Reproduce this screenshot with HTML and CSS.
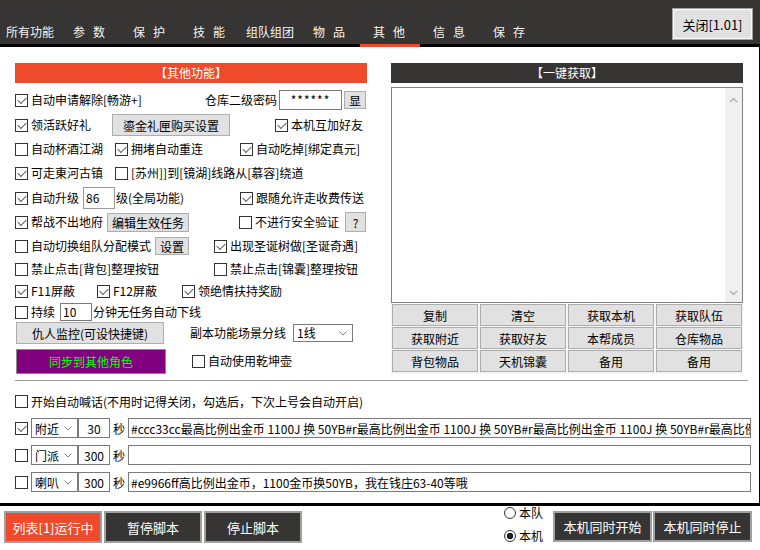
FILE: index.html
```html
<!DOCTYPE html>
<html lang="zh-CN">
<head>
<meta charset="utf-8">
<title>其他功能</title>
<link rel="stylesheet" href="styles.css">
</head>
<body>
<div class="app">
  <header class="topbar">
    <nav class="tabs">
      <span class="tab">所有功能</span>
      <span class="tab sp">参数</span>
      <span class="tab sp">保护</span>
      <span class="tab sp">技能</span>
      <span class="tab">组队组团</span>
      <span class="tab sp">物品</span>
      <span class="tab sp active">其他</span>
      <span class="tab sp">信息</span>
      <span class="tab sp">保存</span>
    </nav>
    <button class="close-btn">关闭[1.01]</button>
  </header>

  <main class="main">
    <div class="cols">
      <section class="left">
        <div class="hdr red">【其他功能】</div>
        <div class="rows">
          <div class="row h24 between">
            <label class="ck"><span class="box on"></span>自动申请解除[畅游+]</label>
            <div class="grp">
              <span>仓库二级密码</span>
              <span class="inp pw">******</span>
              <button class="btn show">显</button>
            </div>
          </div>
          <div class="row h26">
            <label class="ck c97"><span class="box on"></span>领活跃好礼</label>
            <button class="btn b-gift">鎏金礼匣购买设置</button>
            <label class="ck push"><span class="box on"></span>本机互加好友</label>
          </div>
          <div class="row h22">
            <label class="ck c100"><span class="box"></span>自动杯酒江湖</label>
            <label class="ck c125"><span class="box on"></span>拥堵自动重连</label>
            <label class="ck"><span class="box on"></span>自动吃掉[绑定真元]</label>
          </div>
          <div class="row h26">
            <label class="ck c100"><span class="box on"></span>可走東河古镇</label>
            <label class="ck"><span class="box"></span>[苏州]]到[镜湖]线路从[慕容]绕道</label>
          </div>
          <div class="row h24">
            <div class="grp c225">
              <label class="ck"><span class="box on"></span>自动升级</label>
              <span class="inp lvl">86</span>
              <span class="after">级(全局功能)</span>
            </div>
            <label class="ck"><span class="box on"></span>跟随允许走收费传送</label>
          </div>
          <div class="row h24">
            <div class="grp c224">
              <label class="ck"><span class="box on"></span>帮战不出地府</label>
              <button class="btn b-edit">编辑生效任务</button>
            </div>
            <label class="ck"><span class="box"></span>不进行安全验证</label>
            <button class="btn b-q">?</button>
          </div>
          <div class="row h24">
            <div class="grp c199">
              <label class="ck"><span class="box"></span>自动切换组队分配模式</label>
              <button class="btn b-set">设置</button>
            </div>
            <label class="ck"><span class="box on"></span>出现圣诞树做[圣诞奇遇]</label>
          </div>
          <div class="row h22">
            <label class="ck c199"><span class="box"></span>禁止点击[背包]整理按钮</label>
            <label class="ck"><span class="box"></span>禁止点击[锦囊]整理按钮</label>
          </div>
          <div class="row h22">
            <label class="ck c82"><span class="box on"></span>F11屏蔽</label>
            <label class="ck c85"><span class="box on"></span>F12屏蔽</label>
            <label class="ck"><span class="box on"></span>领绝情扶持奖励</label>
          </div>
          <div class="row h20">
            <label class="ck"><span class="box"></span>持续</label>
            <span class="inp mins">10</span>
            <span class="after">分钟无任务自动下线</span>
          </div>
          <div class="row h22">
            <button class="btn b-enemy">仇人监控(可设快捷键)</button>
            <span class="lbl-line">副本功能场景分线</span>
            <span class="sel line-sel">1线<svg width="8" height="5" viewBox="0 0 8 5"><polyline points="0.5,0.5 4,4 7.5,0.5" fill="none" stroke="#808080"/></svg></span>
          </div>
          <div class="row h28 mt3">
            <button class="btn purple">同步到其他角色</button>
            <label class="ck ml26"><span class="box"></span>自动使用乾坤壶</label>
          </div>
        </div>
      </section>

      <section class="right">
        <div class="hdr dark">【一键获取】</div>
        <div class="ta">
          <div class="ta-body"></div>
          <div class="vscroll">
            <svg width="9" height="6" viewBox="0 0 9 6"><polyline points="1,5 4.5,1.5 8,5" fill="none" stroke="#a6a6a6" stroke-width="1.2"/></svg>
            <svg width="9" height="6" viewBox="0 0 9 6"><polyline points="1,1 4.5,4.5 8,1" fill="none" stroke="#a6a6a6" stroke-width="1.2"/></svg>
          </div>
        </div>
        <div class="grid">
          <button class="gb">复制</button>
          <button class="gb">清空</button>
          <button class="gb">获取本机</button>
          <button class="gb">获取队伍</button>
          <button class="gb">获取附近</button>
          <button class="gb">获取好友</button>
          <button class="gb">本帮成员</button>
          <button class="gb">仓库物品</button>
          <button class="gb">背包物品</button>
          <button class="gb">天机锦囊</button>
          <button class="gb">备用</button>
          <button class="gb">备用</button>
        </div>
      </section>
    </div>

    <hr class="divider">

    <div class="shout">
      <div class="srow">
        <label class="ck"><span class="box"></span>开始自动喊话(不用时记得关闭，勾选后，下次上号会自动开启)</label>
      </div>
      <div class="srow">
        <span class="box on"></span>
        <span class="sel ssel">附近<svg width="8" height="5" viewBox="0 0 8 5"><polyline points="0.5,0.5 4,4 7.5,0.5" fill="none" stroke="#808080"/></svg></span>
        <span class="inp num">30</span>
        <span class="sec">秒</span>
        <span class="inp long">#ccc33cc最高比例出金币 1100J 换 50YB#r最高比例出金币 1100J 换 50YB#r最高比例出金币 1100J 换 50YB#r最高比例出金币</span>
      </div>
      <div class="srow">
        <span class="box"></span>
        <span class="sel ssel">门派<svg width="8" height="5" viewBox="0 0 8 5"><polyline points="0.5,0.5 4,4 7.5,0.5" fill="none" stroke="#808080"/></svg></span>
        <span class="inp num">300</span>
        <span class="sec">秒</span>
        <span class="inp long"></span>
      </div>
      <div class="srow">
        <span class="box"></span>
        <span class="sel ssel">喇叭<svg width="8" height="5" viewBox="0 0 8 5"><polyline points="0.5,0.5 4,4 7.5,0.5" fill="none" stroke="#808080"/></svg></span>
        <span class="inp num">300</span>
        <span class="sec">秒</span>
        <span class="inp long">#e9966ff高比例出金币，1100金币换50YB，我在钱庄63-40等哦</span>
      </div>
    </div>
  </main>

  <footer class="bottombar">
    <div class="bgroup">
      <button class="bb red">列表[1]运行中</button>
      <button class="bb">暂停脚本</button>
      <button class="bb">停止脚本</button>
    </div>
    <div class="radios">
      <label class="radio"><span class="dot"></span>本队</label>
      <label class="radio"><span class="dot on"></span>本机</label>
    </div>
    <div class="bgroup right-btns">
      <button class="bb wide">本机同时开始</button>
      <button class="bb wide">本机同时停止</button>
    </div>
  </footer>
</div>
</body>
</html>
```

FILE: styles.css
```css
* { box-sizing: border-box; }
html, body { margin: 0; padding: 0; }
body {
  width: 760px;
  height: 550px;
  overflow: hidden;
  background: #fff;
  font-family: "Noto Sans CJK SC", "Noto Sans", sans-serif;
  font-size: 12px;
  color: #000;
}
button { font-family: inherit; padding: 0; cursor: default; }

.app { display: flex; flex-direction: column; width: 760px; height: 550px; }

/* top bar */
.topbar {
  height: 47px;
  flex: none;
  background: #363533;
  border-bottom: 3px solid #000;
  display: flex;
  justify-content: space-between;
  align-items: flex-start;
}
.tabs { display: flex; align-self: flex-end; margin-bottom: -3px; }
.tab {
  width: 60px;
  height: 27px;
  line-height: 24px;
  text-align: center;
  color: #f4f4f4;
  font-size: 12px;
  border-bottom: 3px solid transparent;
  white-space: nowrap;
}
.tab.sp { letter-spacing: 8px; text-indent: 6px; }
.tab.active { border-bottom-color: #ee4a2b; }
.close-btn {
  margin: 8px 7px 0 0;
  width: 81px;
  height: 32px;
  background: #e1e1e1;
  border: 1px solid #a0a0a0;
  box-shadow: inset 0 0 0 1px #fafafa;
  font-size: 13px;
  color: #000;
}

/* main */
.main {
  flex: none;
  height: 459px;
  border-right: 1px solid #000;
  border-bottom: 3px solid #000;
  padding: 16px 0 0 15px;
}
.cols { display: flex; gap: 24px; align-items: flex-start; }
.left, .right { width: 352px; flex: none; }

.hdr {
  height: 20px;
  line-height: 20px;
  text-align: center;
  color: #fff;
  font-size: 12px;
}
.hdr.red { background: #ee4a2b; }
.hdr.dark { background: #363533; }

.rows { margin-top: 5px; display: flex; flex-direction: column; }
.row { display: flex; align-items: center; white-space: nowrap; line-height: 14px; }
.between { justify-content: space-between; padding-right: 1px; }
.h20 { height: 20px; }
.h22 { height: 22px; }
.h24 { height: 24px; }
.h26 { height: 26px; }
.h28 { height: 28px; }
.mt3 { margin-top: 3px; }
.ml26 { margin-left: 26px; }
.push { margin-left: auto; margin-right: 4px; }

.grp { display: flex; align-items: center; }
.c82 { width: 82px; }
.c85 { width: 85px; }
.c97 { width: 97px; }
.c100 { width: 100px; }
.c125 { width: 125px; }
.c199 { width: 199px; }
.c224 { width: 224px; }
.c225 { width: 225px; }

/* checkbox */
.ck { display: inline-flex; align-items: center; gap: 3px; }
.box {
  width: 13px;
  height: 13px;
  border: 1px solid #333;
  background: #fff;
  position: relative;
  flex: none;
}
.box.on::after {
  content: "";
  position: absolute;
  left: 2px;
  top: 2px;
  width: 7px;
  height: 4px;
  border-left: 1.5px solid #555;
  border-bottom: 1.5px solid #555;
  transform: rotate(-45deg);
}

/* inputs */
.inp {
  display: inline-flex;
  align-items: center;
  border: 1px solid #7a7a7a;
  background: #fff;
  height: 20px;
  padding: 0 3px;
  white-space: nowrap;
  overflow: hidden;
}
.pw { width: 63px; margin-left: 2px; justify-content: center; letter-spacing: 1px; }
.lvl { width: 32px; height: 22px; margin-left: 4px; padding-left: 2px; border-color: #9a9a9a; }
.mins { width: 32px; height: 18px; margin-left: 5px; padding-left: 2px; }
.after { margin-left: 1px; }

.sel {
  display: inline-flex;
  align-items: center;
  justify-content: space-between;
  border: 1px solid #7a7a7a;
  background: #fff;
  height: 20px;
  padding: 0 5px 0 3px;
}
.line-sel { width: 60px; height: 18px; margin-left: 7px; }
.lbl-line { margin-left: 26px; }

/* buttons */
.btn {
  background: #e1e1e1;
  border: 1px solid #adadad;
  font-size: 12px;
  color: #000;
  height: 22px;
}
.show { width: 22px; height: 18px; margin-left: 2px; }
.b-gift { width: 118px; height: 22px; }
.b-edit { width: 82px; height: 19px; margin-left: 4px; }
.b-q { width: 21px; height: 20px; margin-left: 6px; }
.b-set { width: 34px; height: 18px; margin-left: 4px; }
.b-enemy { width: 148px; height: 22px; margin-left: 1px; }
.purple {
  width: 150px;
  height: 25px;
  margin-left: 1px;
  background: #800080;
  border: 1px solid #8a8a8a;
  color: #00ff00;
}

/* right panel */
.ta {
  margin-top: 4px;
  height: 216px;
  border: 1px solid #828282;
  display: flex;
}
.ta-body { flex: 1; }
.vscroll {
  width: 17px;
  background: #f0f0f0;
  display: flex;
  flex-direction: column;
  justify-content: space-between;
  align-items: center;
  padding: 9px 0 6px;
}
.grid {
  margin-top: 1px;
  display: grid;
  grid-template-columns: repeat(4, 86px);
  grid-auto-rows: 22px;
  gap: 1px 2px;
  padding: 0 0 2px 1px;
  background: #f5f5f5;
}
.gb {
  background: #e1e1e1;
  border: 1px solid #adadad;
  font-size: 12px;
  color: #000;
}

.divider {
  margin: 5px 11px 0 0;
  height: 1px;
  border: 0;
  background: #a0a0a0;
}

/* shout rows */
.shout { margin-top: 10px; display: flex; flex-direction: column; gap: 7px; padding-right: 8px; }
.srow { display: flex; align-items: center; height: 20px; white-space: nowrap; }
.ssel { width: 47px; margin-left: 3px; }
.num { width: 32px; justify-content: center; }
.sec { margin: 0 3px; }
.long { flex: 1; min-width: 0; padding-left: 2px; }

/* bottom bar */
.bottombar {
  flex: none;
  height: 44px;
  display: flex;
  align-items: flex-start;
  padding: 5px 8px 0 4px;
}
.bgroup { display: flex; gap: 2px; }
.bb {
  width: 98px;
  height: 32px;
  background: #363533;
  border: 2px solid #a0a0a0;
  color: #fff;
  font-size: 13px;
}
.bb.red { background: #ee4a2b; }
.radios {
  margin-left: auto;
  margin-top: -5px;
  display: flex;
  flex-direction: column;
  gap: 9px;
}
.radio { display: flex; align-items: center; gap: 3px; height: 14px; line-height: 14px; }
.dot {
  width: 12px;
  height: 12px;
  border: 1px solid #333;
  border-radius: 50%;
  background: #fff;
  flex: none;
}
.dot.on { background: radial-gradient(circle, #222 0 3px, #fff 3.6px); }
.right-btns { margin-left: 10px; gap: 1px; }
.bb.wide { width: 99px; height: 31px; }
```
